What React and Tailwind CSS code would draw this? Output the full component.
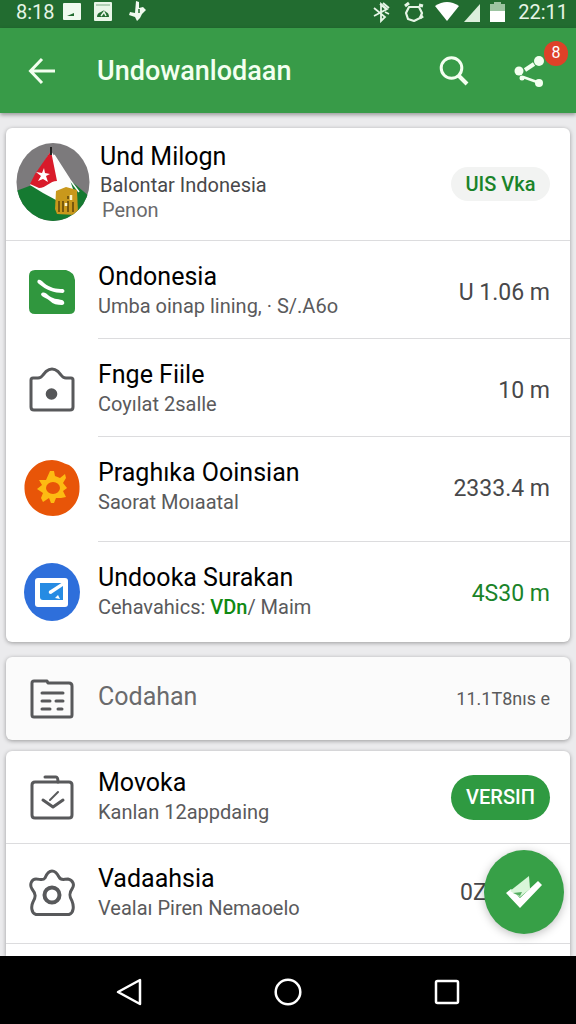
import React from "react";

const stroke = {
  fill: "none",
  stroke: "#58595b",
  strokeWidth: 3,
  strokeLinecap: "round",
  strokeLinejoin: "round",
};

function FlagAvatar() {
  return (
    <svg width="74" height="78" viewBox="0 0 74 78" aria-hidden="true">
      <defs>
        <clipPath id="avatar-clip">
          <ellipse cx="37" cy="39" rx="36.5" ry="39" />
        </clipPath>
      </defs>
      <g clipPath="url(#avatar-clip)">
        <rect width="74" height="78" fill="#7c7a7c" />
        <path d="M0 48 L16 42 L54 37 L74 54 V78 H0 Z" fill="#157a31" />
        <path d="M35 8 L54 37 L57 46 L40 57 L27 50 L14 42 Z" fill="#fdfdfd" />
        <path d="M35 8 L41 38 C34 38 30 45 23 45 L14 41 L19 31 Z" fill="#d91a2a" />
        <path d="M38 12 L54 37 L63 49" fill="none" stroke="#fdfdfd" strokeWidth="1.5" />
        <path d="M35 4 V12" stroke="#222" strokeWidth="2" />
        <path d="M28 25 L29 30 L34 31 L30 33 L32 39 L27 36 L22 38 L25 33 L20 29 L26 30 Z" fill="#fff" />
        <path d="M40 48 L50 44 L61 47 L62 70 L59 72 L41 71 L39 66 Z" fill="#c9981c" />
        <path d="M43 58 V69 M47 58 V69 M52 58 V69 M57 59 V69 M52 53 V56" stroke="#6f520d" strokeWidth="1.8" />
        <path d="M55 52 V57 M50 60 V63" stroke="#fff6cf" strokeWidth="2.5" />
      </g>
    </svg>
  );
}

function GreenTile() {
  return (
    <svg width="46" height="44" viewBox="0 0 46 44" aria-hidden="true">
      <path d="M6 0 H37 Q45 2 46 10 V39 Q46 44 40 44 H6 Q0 44 0 38 V6 Q0 0 6 0 Z" fill="#30973e" />
      <path d="M9 10 C11 9 13 11 15 13 C21 18 27 19 34 19 C36 20 36 22 34 23 C25 23 17 20 10 14 C8 13 8 11 9 10 Z" fill="#fff" />
      <path d="M12 24 C14 21 17 23 19 25 C23 29 29 29 33 30 C36 31 36 35 33 35 C28 35 24 34 21 31 C18 28 12 27 12 24 Z" fill="#fff" />
    </svg>
  );
}

function CameraIcon() {
  return (
    <svg width="46" height="46" viewBox="0 0 46 46" aria-hidden="true">
      <path {...stroke} d="M4 11 H9 Q12 11 14 8 L17 4.500 Q23 -0.500 29 4.500 L32 8 Q34 11 37 11 H42 Q44 11 44 13 V40 Q44 43 41 43 H5 Q2 43 2 40 V13 Q2 11 4 11 Z" />
      <circle cx="22.500" cy="27" r="5.800" fill="#555658" />
    </svg>
  );
}

function OrangeGear() {
  return (
    <svg width="56" height="56" viewBox="0 0 56 56" aria-hidden="true">
      <path d="M28 0 C34 0 39 3 45 5 C52 9 56 19 55.500 28 C56 43 44 56 29 56 C13 56 1 44 0.500 29 C0 13 12 0 28 0 Z" fill="#e85508" />
      <path
        d="M26 11 H30 L31 16 L36 18 L41 14 L42 18 L39 23 L43 28 L39 31 L42 37 L37 38 L32 38 L30 43 H27 L25 38 L19 42 L17 38 L19 33 L13 29 L18 25 L15 20 L22 20 Z"
        fill="#fdbb12"
      />
      <ellipse cx="29" cy="28" rx="7" ry="6" fill="#e85508" />
    </svg>
  );
}

function BlueScreen() {
  return (
    <svg width="56" height="58" viewBox="0 0 56 58" aria-hidden="true">
      <ellipse cx="28" cy="29" rx="28" ry="29" fill="#2e6fdb" />
      <rect x="11" y="15" width="33" height="29" rx="3" fill="#fff" />
      <path d="M16 20 H39 V37 H19 Q16 37 16 34 Z" fill="#268be3" />
      <path d="M39 19 L25 28 Q24 31 27 31 L39 23 Z" fill="#fff" />
      <path d="M31 35 L34 32 L36 36 Z" fill="#fff" />
    </svg>
  );
}

function DocumentIcon() {
  return (
    <svg width="44" height="40" viewBox="0 0 44 40" aria-hidden="true">
      <path {...stroke} d="M2 7 V36 Q2 38 4 38 H40 Q42 38 42 36 V7 Q42 4 39 4 H18 L17 2 H4 Q2 2 2 4 V7" />
      <path {...stroke} d="M12 14 H33 M12 22 H20 M26 22 H33 M12 30 H20 M28 30 H32" />
    </svg>
  );
}

function CaseIcon() {
  return (
    <svg width="44" height="46" viewBox="0 0 44 46" aria-hidden="true">
      <path {...stroke} d="M5 8 H39 Q42 8 42 11 V41 Q42 44 39 44 H5 Q2 44 2 41 V11 Q2 8 5 8 Z" />
      <path {...stroke} d="M15 3 H26 Q28 3 28 8" />
      <path {...stroke} d="M13 26 L23 33 L33 26" />
      <path {...stroke} strokeWidth="2" d="M20 26 L28 18" />
    </svg>
  );
}

function FlowerIcon() {
  return (
    <svg width="46" height="48" viewBox="0 0 46 48" aria-hidden="true">
      <path
        {...stroke}
        d="M16 9 C18 4 20 2 23 2 C26 2 28 4 30 8 C32 12 35 10 39 10 C44 11 46 16 43 20 C40 24 40 27 43 32 C45 37 45 44 40 45.500 H7 C2 44 2 37 4 33 C7 28 7 25 3 20 C0 15 3 10 7 10 C11 10 14 12 16 9 Z"
      />
      <circle cx="23" cy="26" r="7.500" fill="none" stroke="#58595b" strokeWidth="4" />
    </svg>
  );
}

function Row({ icon, title, sub, value, pad, full, last }) {
  return (
    <li className={`flex ${full && !last ? "border-b border-[#dcdcde]" : ""}`}>
      <div className={`flex w-[92px] shrink-0 items-center justify-center ${pad}`}>{icon}</div>
      <div
        className={`flex min-w-0 flex-1 items-center justify-between pr-5 ${pad} ${
          !full && !last ? "border-b border-[#dcdcde]" : ""
        }`}
      >
        <div className="min-w-0 whitespace-nowrap">
          <h2 className="text-[25px] leading-[30px] text-black">{title}</h2>
          <p className="text-xl leading-7 text-[#5a5a5c]">{sub}</p>
        </div>
        {value}
      </div>
    </li>
  );
}

function Amount({ children, color = "text-[#48484a]" }) {
  return <span className={`shrink-0 pt-1 text-[23px] leading-[30px] ${color}`}>{children}</span>;
}

const card = "bg-white shadow-[0_1px_4px_rgba(0,0,0,0.35)]";

export default function App() {
  return (
    <div className="flex h-dvh flex-col bg-[#ebebed] font-[Roboto,sans-serif]">
      <div className="flex h-7 shrink-0 items-start justify-between bg-[#226c30] pl-4 pr-2 text-[#e6f5e6]">
        <div className="flex items-center">
          <span className="w-[47px] text-xl leading-6">8:18</span>
          <svg width="84" height="22" viewBox="0 0 84 22" aria-hidden="true">
            <rect x="0" y="2" width="18" height="17" rx="1" fill="#f0faef" />
            <path d="M4 15 L11 12 V15 Z" fill="#226c30" />
            <rect x="31" y="1" width="18" height="19" rx="1" fill="#e9f6e8" />
            <path d="M33 4 H47" stroke="#7ba982" />
            <path d="M34 16 Q34 12 38 11 Q41 8 43 11 Q46 12 46 16 Z" fill="#226c30" />
            <path d="M38 15 L41 11 L43 15" fill="none" stroke="#e9f6e8" strokeWidth="1.5" />
            <path d="M73 0 L76 1 V7 L80 6 L83 9 L79 13 L77 17 L74 20 L72 16 L66 14 L67 11 L72 12 Z" fill="#f0faef" />
            <path d="M76 8 V12" stroke="#226c30" strokeWidth="1.500" />
          </svg>
        </div>
        <div className="flex items-center gap-3">
          <svg width="134" height="22" viewBox="0 0 134 22" aria-hidden="true">
            <g fill="none" stroke="#e6f5e6" strokeWidth="1.8">
              <path d="M2 7 L13 16 L9 20 V3 L15 8 L2 15 M8 3 L14 8 M11 2 L17 7 M13 11 L17 13" />
              <path d="M37 6 L47 6 L50 12 L48 17 L42 20 L36 18 L34 12 Z" strokeWidth="2.200" strokeLinejoin="round" />
              <path d="M33 5 L37 2 M47 4 L51 5 M48 17 L51 15" strokeWidth="3" />
            </g>
            <path d="M63 5 Q75 -3 87 5 L75 20 Z" fill="#fff" />
            <path d="M92 21 L108 3 V21 Z" fill="#dcefdc" />
            <path d="M122 1 H129 V3 H133 V21 H118 V3 H122 Z" fill="#9cc4a1" />
            <path d="M118 10 H133 V21 H118 Z" fill="#fff" />
          </svg>
          <span className="text-xl leading-6">22:11</span>
        </div>
      </div>

      <header className="z-10 flex h-[85px] shrink-0 items-center bg-[#389b48] pl-5 pr-1 text-white shadow-[0_2px_4px_rgba(0,0,0,0.35)]">
        <button type="button" aria-label="Back" className="flex h-11 w-11 items-center justify-center">
          <svg width="28" height="28" viewBox="0 0 28 28" fill="none" stroke="#f3fff0" strokeWidth="3" aria-hidden="true">
            <path d="M27 14 H3 M14 2 L2.500 14 L14 26" />
          </svg>
        </button>
        <h1 className="ml-[33px] flex-1 text-[27px] font-medium leading-8 text-[#f3fff0]">Undowanlodaan</h1>
        <button type="button" aria-label="Search" className="flex h-11 w-11 items-center justify-center">
          <svg width="30" height="30" viewBox="0 0 30 30" fill="none" stroke="#f3fff0" strokeWidth="3" aria-hidden="true">
            <circle cx="12.500" cy="12" r="10.300" />
            <path d="M19 19 L28 28" strokeWidth="4" />
          </svg>
        </button>
        <button type="button" aria-label="Share" className="relative ml-[34px] flex h-[60px] w-[62px] items-center justify-start pl-1">
          <svg width="30" height="32" viewBox="0 0 30 32" fill="#f3fff0" stroke="#f3fff0" aria-hidden="true">
            <circle cx="5" cy="16" r="4.500" stroke="none" />
            <circle cx="25" cy="6" r="5" stroke="none" />
            <circle cx="25" cy="28" r="4" stroke="none" />
            <circle cx="8" cy="23" r="2.500" stroke="none" />
            <path d="M11 15 L20 9" strokeWidth="4" />
            <path d="M9 22 L23 27" strokeWidth="2.500" />
          </svg>
          <span className="absolute right-1 top-0 flex h-[25px] w-6 items-center justify-center rounded-full bg-[#de4128] text-base leading-4">
            8
          </span>
        </button>
      </header>

      <div className="relative min-h-0 flex-1">
        <main className="flex h-full flex-col gap-[11px] overflow-y-auto px-1.5 pt-[15px] [scrollbar-width:none]">
          <ul className={`mb-1 shrink-0 rounded-md ${card}`}>
            <li className="flex items-center border-b border-[#dcdcde] pb-[18px] pt-[14px]">
              <div className="flex w-[94px] shrink-0 justify-center">
                <FlagAvatar />
              </div>
              <div className="flex-1 whitespace-nowrap">
                <h2 className="text-[25px] leading-[30px] text-black">Und Milogn</h2>
                <p className="text-xl leading-[26px] text-[#48484a]">Balontar Indonesia</p>
                <p className="pl-0.5 text-xl leading-6 text-[#6a6a6c]">Penon</p>
              </div>
              <button type="button" className="mr-5 mt-1 h-[34px] w-[99px] rounded-full bg-[#f2f3f2] text-xl font-medium leading-7 text-[#1a8329]">
                UIS Vka
              </button>
            </li>
            <Row icon={<GreenTile />} title="Ondonesia" sub="Umba oinap lining, · S/.A6o" value={<Amount>U 1.06 m</Amount>} pad="pt-[21px] pb-[18px]" />
            <Row icon={<CameraIcon />} title="Fnge Fiile" sub="Coyılat 2salle" value={<Amount>10 m</Amount>} pad="pt-[21px] pb-[18px]" />
            <Row icon={<OrangeGear />} title="Praghıka Ooinsian" sub="Saorat Moıaatal" value={<Amount>2333.4 m</Amount>} pad="pt-[21px] pb-[25px]" />
            <Row
              icon={<BlueScreen />}
              title="Undooka Surakan"
              sub={
                <>
                  Cehavahics: <span className="font-medium text-[#0f8a12]">VDn</span>/ Maim
                </>
              }
              value={<Amount color="text-[#1a8329]">4S30 m</Amount>}
              pad="pt-[21px] pb-[21px]"
              last
            />
          </ul>

          <section className="flex h-[83px] shrink-0 items-center rounded-md bg-[#fbfbfb] pr-5 shadow-[0_1px_4px_rgba(0,0,0,0.35)]">
            <div className="flex w-[92px] shrink-0 justify-center">
              <DocumentIcon />
            </div>
            <h2 className="flex-1 pb-1 text-[25px] leading-[30px] text-[#6a6a6c]">Codahan</h2>
            <span className="text-lg leading-6 text-[#5a5a5c]">11.1T8nıs e</span>
          </section>

          <ul className={`shrink-0 rounded-t-md ${card}`}>
            <Row
              icon={<CaseIcon />}
              title="Movoka"
              sub="Kanlan 12appdaing"
              value={
                <button type="button" className="h-[45px] w-[99px] rounded-full bg-[#2f9a41] text-xl font-medium leading-7 text-white">
                  VERSIП
                </button>
              }
              pad="pt-[17px] pb-[17px]"
              full
            />
            <Row
              icon={<FlowerIcon />}
              title="Vadaahsia"
              sub="Vealaı Piren Nemaoelo"
              value={
                <span className="w-[90px]">
                  <Amount>0Z</Amount>
                </span>
              }
              pad="pt-5 pb-[21px]"
              full
            />
            <li className="h-3" />
          </ul>
        </main>
        <button
          type="button"
          aria-label="Confirm"
          className="absolute bottom-[22px] right-3 flex h-[84px] w-20 items-center justify-center rounded-[50%] bg-[#37a047] shadow-[0_2px_10px_rgba(0,0,0,0.25)]"
        >
          <svg width="38" height="34" viewBox="0 0 38 34" aria-hidden="true">
            <path d="M1 18 L6 14 L15 23 L33 6 L37 10 L15 33 Z" fill="#fff" />
            <path d="M5 16 L24 1 L25 14 L15 22 Z" fill="#d9f6d9" />
            <path d="M8 18 L17 17 L15 21 Z" fill="#55ad61" />
          </svg>
        </button>
      </div>

      <nav className="z-10 flex h-[68px] shrink-0 items-center justify-around bg-black px-[49px] pt-1">
        <button type="button" aria-label="Back" className="flex h-11 w-11 items-center justify-center">
          <svg width="26" height="28" viewBox="0 0 26 28" fill="none" stroke="#fff" strokeWidth="2.500" strokeLinejoin="round" aria-hidden="true">
            <path d="M24 2 V26 L2 14 Z" />
          </svg>
        </button>
        <button type="button" aria-label="Home" className="flex h-11 w-11 items-center justify-center">
          <svg width="28" height="28" viewBox="0 0 28 28" fill="none" stroke="#fff" strokeWidth="2.500" aria-hidden="true">
            <circle cx="14" cy="14" r="12.300" />
          </svg>
        </button>
        <button type="button" aria-label="Recent apps" className="flex h-11 w-11 items-center justify-center">
          <svg width="26" height="26" viewBox="0 0 26 26" fill="none" stroke="#fff" strokeWidth="2.500" aria-hidden="true">
            <rect x="2" y="2" width="22" height="22" rx="1.500" />
          </svg>
        </button>
      </nav>
    </div>
  );
}
